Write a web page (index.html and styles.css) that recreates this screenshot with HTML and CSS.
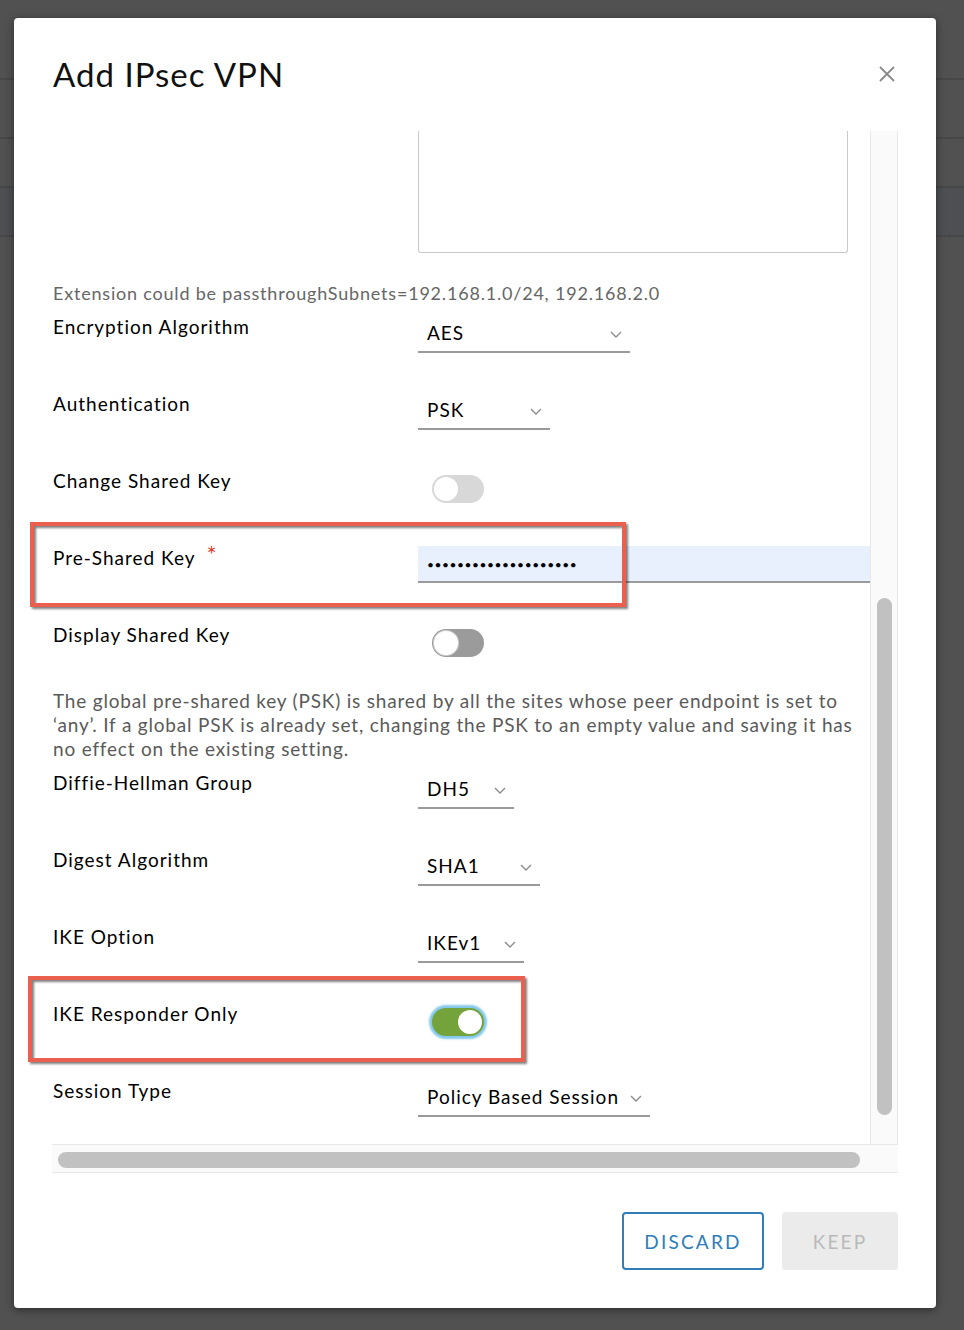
FILE: index.html
```html
<!DOCTYPE html>
<html lang="en">
<head>
<meta charset="utf-8">
<title>Add IPsec VPN</title>
<link rel="stylesheet" href="styles.css">
</head>
<body>
<div class="backdrop">
  <div class="bg-row bg-a"></div>
  <div class="bg-row bg-b"></div>
  <div class="bg-row bg-c"></div>
  <div class="bg-row bg-d"></div>
</div>

<div class="modal">
  <header class="modal-header">
    <h1 class="modal-title">Add IPsec VPN</h1>
    <button class="close" aria-label="Close">
      <svg width="18" height="18" viewBox="0 0 18 18"><path d="M2 2 L16 16 M16 2 L2 16" stroke="#8a8a8a" stroke-width="1.8" fill="none"/></svg>
    </button>
  </header>

  <div class="modal-body">
    <div class="scroll">
      <div class="viewport">
        <div class="form">
          <div class="textarea-stub"></div>
          <p class="hint">Extension could be passthroughSubnets=192.168.1.0/24, 192.168.2.0</p>

          <div class="row">
            <div class="label">Encryption Algorithm</div>
            <div class="select w-aes"><span>AES</span><svg class="chev" width="12" height="7" viewBox="0 0 12 7"><polyline points="1,1 6,6 11,1"/></svg></div>
          </div>

          <div class="row">
            <div class="label">Authentication</div>
            <div class="select w-psk"><span>PSK</span><svg class="chev" width="12" height="7" viewBox="0 0 12 7"><polyline points="1,1 6,6 11,1"/></svg></div>
          </div>

          <div class="row">
            <div class="label">Change Shared Key</div>
            <div class="toggle toggle-disabled"><span class="knob"></span></div>
          </div>

          <div class="row">
            <div class="label">Pre-Shared Key<span class="req">*</span></div>
            <div class="input"><span class="dots">••••••••••••••••••••</span></div>
          </div>

          <div class="row row-short">
            <div class="label">Display Shared Key</div>
            <div class="toggle toggle-off"><span class="knob"></span></div>
          </div>

          <p class="help">The global pre-shared key (PSK) is shared by all the sites whose peer endpoint is set to ‘any’. If a global PSK is already set, changing the PSK to an empty value and saving it has no effect on the existing setting.</p>

          <div class="row">
            <div class="label">Diffie-Hellman Group</div>
            <div class="select w-dh"><span>DH5</span><svg class="chev" width="12" height="7" viewBox="0 0 12 7"><polyline points="1,1 6,6 11,1"/></svg></div>
          </div>

          <div class="row">
            <div class="label">Digest Algorithm</div>
            <div class="select w-sha"><span>SHA1</span><svg class="chev" width="12" height="7" viewBox="0 0 12 7"><polyline points="1,1 6,6 11,1"/></svg></div>
          </div>

          <div class="row">
            <div class="label">IKE Option</div>
            <div class="select w-ike"><span>IKEv1</span><svg class="chev" width="12" height="7" viewBox="0 0 12 7"><polyline points="1,1 6,6 11,1"/></svg></div>
          </div>

          <div class="row">
            <div class="label">IKE Responder Only</div>
            <div class="toggle toggle-on"><span class="knob"></span></div>
          </div>

          <div class="row">
            <div class="label">Session Type</div>
            <div class="select w-session"><span>Policy Based Session</span><svg class="chev" width="12" height="7" viewBox="0 0 12 7"><polyline points="1,1 6,6 11,1"/></svg></div>
          </div>
        </div>
      </div>
      <div class="vbar"><div class="vthumb"></div></div>
    </div>
    <div class="hbar"><div class="hthumb"></div></div>
  </div>

  <footer class="modal-footer">
    <button class="btn btn-outline">DISCARD</button>
    <button class="btn btn-disabled">KEEP</button>
  </footer>

  <div class="mark mark-psk"></div>
  <div class="mark mark-ike"></div>
</div>
</body>
</html>
```

FILE: styles.css
```css
* { box-sizing: border-box; }

html, body {
  margin: 0;
  padding: 0;
}

body {
  width: 964px;
  height: 1330px;
  background: #515151;
  font-family: Lato, "Open Sans", "Liberation Sans", sans-serif;
  position: relative;
  overflow: hidden;
}

/* backdrop page rows */
.bg-row { border-bottom: 2px solid #474747; }
.bg-a { height: 80px; }
.bg-b { height: 59px; }
.bg-c { height: 49px; }
.bg-d { height: 49px; background: #4d4f53; }

/* modal */
.modal {
  position: absolute;
  left: 14px;
  top: 18px;
  width: 922px;
  height: 1290px;
  background: #fff;
  border-radius: 4px;
  box-shadow: 0 2px 8px rgba(0, 0, 0, 0.45);
  padding: 0 38px;
  display: flex;
  flex-direction: column;
}

.modal-header {
  height: 113px;
  padding-top: 36px;
  display: flex;
  justify-content: space-between;
  align-items: flex-start;
}

.modal-title {
  margin: 0 0 0 1px;
  font-size: 33px;
  line-height: 40px;
  font-weight: 400;
  color: #111;
  letter-spacing: 1px;
}

.close {
  border: 0;
  background: none;
  padding: 0;
  margin: 11px 2px 0 0;
  width: 18px;
  height: 18px;
}
.close svg { display: block; }

/* scroll area */
.scroll {
  display: grid;
  grid-template-columns: 1fr 28px;
  height: 1013px;
}

.viewport {
  overflow: hidden;
  position: relative;
}

.vbar {
  background: #fafafa;
  border-left: 1px solid #e8e8e8;
  border-right: 1px solid #e8e8e8;
  padding: 467px 0 0 6px;
}
.vthumb {
  width: 15px;
  height: 517px;
  border-radius: 8px;
  background: #c1c1c1;
}

.hbar {
  height: 29px;
  background: #fafafa;
  border-top: 1px solid #e8e8e8;
  border-bottom: 1px solid #e8e8e8;
  padding: 7px 0 0 6px;
}
.hthumb {
  width: 802px;
  height: 16px;
  border-radius: 8px;
  background: #c1c1c1;
}

/* form */
.form {
  width: 900px;
}

.textarea-stub {
  margin-left: 366px;
  width: 430px;
  height: 122px;
  border: 1px solid #c9c9c9;
  border-top: 0;
  border-radius: 0 0 3px 3px;
}

.hint {
  margin: 28px 0 10px 1px;
  font-size: 18px;
  line-height: 24px;
  color: #666;
  letter-spacing: 0.8px;
}

.row {
  display: flex;
  height: 77px;
}
.row-short { height: 66px; }

.label {
  width: 366px;
  padding-left: 1px;
  font-size: 19px;
  line-height: 24px;
  color: #000;
  letter-spacing: 1px;
}

.req {
  color: #d9432f;
  font-size: 24px;
  line-height: 0;
  vertical-align: 2px;
  margin-left: 11px;
}

.help {
  margin: 0 0 10px 1px;
  width: 816px;
  font-size: 19px;
  line-height: 24px;
  color: #5a5a5a;
  letter-spacing: 0.8px;
}

/* select */
.select {
  height: 38px;
  border-bottom: 2px solid #9a9a9a;
  padding: 0 8px 0 9px;
  display: flex;
  align-items: center;
  justify-content: space-between;
  font-size: 19px;
  color: #000;
  letter-spacing: 1px;
}
.select span { line-height: 36px; }
.chev { display: block; flex: none; margin-top: 2px; }
.chev polyline { fill: none; stroke: #8c8c8c; stroke-width: 1.4; }

.w-aes { width: 212px; }
.w-psk { width: 132px; }
.w-dh { width: 96px; }
.w-sha { width: 122px; }
.w-ike { width: 106px; }
.w-session { width: 232px; }

/* input */
.input {
  width: 480px;
  height: 37px;
  background: #e8f0fe;
  border-bottom: 2px solid #9a9a9a;
  padding-left: 9px;
  display: flex;
  align-items: center;
}
.dots {
  font-size: 12px;
  letter-spacing: 0.55px;
  color: #000;
  padding-top: 2px;
}

/* toggle */
.toggle {
  margin: 6px 0 0 14px;
  width: 52px;
  height: 28px;
  border-radius: 14px;
  position: relative;
}
.knob {
  position: absolute;
  top: 2px;
  left: 2px;
  width: 24px;
  height: 24px;
  border-radius: 50%;
  background: #fff;
}
.toggle-disabled { background: #d8d8d8; }
.toggle-off { background: #9b9b9b; }
.toggle-off .knob { box-shadow: 0 0 0 1px #cfcfcf; }
.toggle-on {
  background: #74a33c;
  box-shadow: 0 0 2px 3px rgba(110, 190, 230, 0.85);
}
.toggle-on .knob { left: 26px; }

/* footer */
.modal-footer {
  padding-top: 39px;
  display: flex;
  justify-content: flex-end;
  gap: 18px;
}

.btn {
  height: 58px;
  border-radius: 4px;
  font-family: Lato, "Open Sans", "Liberation Sans", sans-serif;
  font-size: 19px;
  letter-spacing: 2.2px;
  padding: 0;
}
.btn-outline {
  width: 142px;
  background: #fff;
  border: 2px solid #2f7db9;
  color: #2f7db9;
}
.btn-disabled {
  width: 116px;
  background: #ebebeb;
  border: 0;
  color: #b9b9b9;
}

/* annotation marks */
.mark {
  position: absolute;
  border: 4px solid #ea5f4e;
  filter: drop-shadow(2px 2px 1px rgba(0, 0, 0, 0.5));
  pointer-events: none;
}
.mark-psk { left: 16px; top: 504px; width: 596px; height: 85px; }
.mark-ike { left: 14px; top: 958px; width: 497px; height: 86px; }
```
